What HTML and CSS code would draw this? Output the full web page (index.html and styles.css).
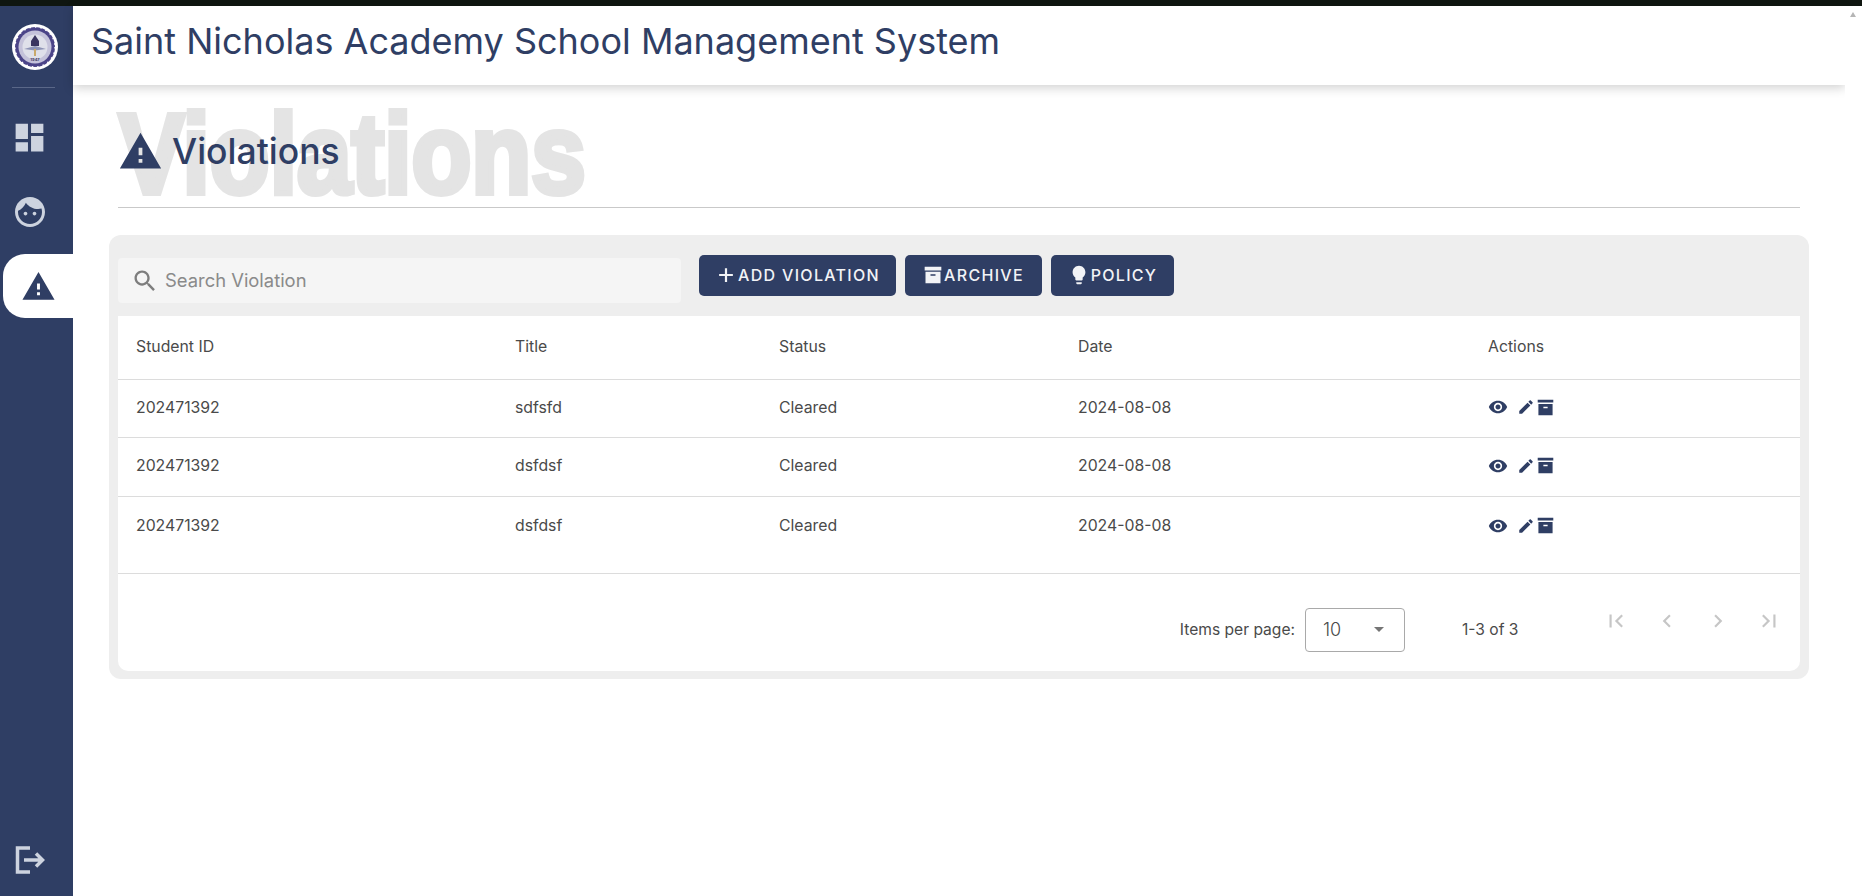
FILE: index.html
```html
<!DOCTYPE html>
<html lang="en">
<head>
    <meta charset="UTF-8">
    <meta name="viewport" content="width=device-width, initial-scale=1.0">
    <title>Violations</title>
    <link rel="stylesheet" href="styles.css">
</head>
<body>
    <div class="topstrip"></div>
    <div class="app">
        <aside class="sidebar">
            <div class="logo">
                <svg viewBox="0 0 46 46" width="46" height="46">
                    <circle cx="23" cy="23" r="23" fill="#fff"/>
                    <circle cx="23" cy="23" r="20" fill="#4b4488"/>
                    <circle cx="23" cy="23" r="20" fill="none" stroke="#fff" stroke-width="1.4" stroke-dasharray="1.5 4"/>
                    <circle cx="23" cy="23" r="16.5" fill="#c4c2da"/>
                    <circle cx="23" cy="23" r="12.5" fill="#dfe0ea"/>
                    <path d="M23 11l4 6v5h-8v-5z" fill="#3a3560"/>
                    <path d="M12 25l11-3 11 3-11 1.500z" fill="#8d93b5"/>
                    <path d="M22 25h2v7h-2z" fill="#c9a96b"/>
                    <text x="23" y="37" class="logo-year">1947</text>
                </svg>
            </div>
            <div class="side-divider"></div>
            <nav class="side-nav">
                <a class="side-item">
                    <svg viewBox="0 0 24 24" width="37" height="37"><path d="M3 13h8V3H3v10zm0 8h8v-6H3v6zm10 0h8V11h-8v10zm0-18v6h8V3h-8z"/></svg>
                </a>
                <a class="side-item">
                    <svg viewBox="0 0 24 24" width="36" height="36"><path d="M9 11.750c-.69 0-1.250.56-1.250 1.250s.56 1.250 1.250 1.250 1.250-.56 1.250-1.250-.56-1.250-1.250-1.250zm6 0c-.69 0-1.250.56-1.250 1.250s.56 1.250 1.250 1.250 1.250-.56 1.250-1.250-.56-1.250-1.250-1.250zM12 2C6.480 2 2 6.480 2 12s4.480 10 10 10 10-4.480 10-10S17.520 2 12 2zm0 18c-4.410 0-8-3.590-8-8 0-.29.02-.58.05-.86 2.360-1.050 4.230-2.980 5.210-5.370C11.070 8.330 14.050 10 17.420 10c.78 0 1.530-.09 2.250-.26.21.71.33 1.470.33 2.260 0 4.410-3.590 8-8 8z"/></svg>
                </a>
                <a class="side-item active">
                    <svg viewBox="0 0 24 24" width="35" height="35"><path d="M1 21h22L12 2 1 21zm12-3h-2v-2h2v2zm0-4h-2v-4h2v4z"/></svg>
                </a>
            </nav>
            <a class="logout">
                <svg viewBox="0 0 30 28" width="30" height="28">
                    <path d="M15 2H2.500v24H15" class="logout-line"/>
                    <path d="M9 14h18M21 7.500l6.500 6.500-6.500 6.500" class="logout-line"/>
                </svg>
            </a>
        </aside>

        <main class="main">
            <header class="header">
                <h1>Saint Nicholas Academy School Management System</h1>
            </header>

            <section class="page-head">
                <span class="watermark">Violations</span>
                <h2>
                    <svg viewBox="0 0 24 24" width="45" height="45"><path d="M1 21h22L12 2 1 21zm12-3h-2v-2h2v2zm0-4h-2v-4h2v4z"/></svg>
                    Violations
                </h2>
            </section>

            <section class="panel">
                <div class="toolbar">
                    <label class="search">
                        <svg viewBox="0 0 24 24" width="28" height="28"><path d="M15.500 14h-.79l-.28-.27C15.410 12.590 16 11.110 16 9.500 16 5.910 13.090 3 9.500 3S3 5.910 3 9.500 5.910 16 9.500 16c1.610 0 3.090-.59 4.230-1.570l.27.28v.79l5 4.990L20.490 19l-4.990-5zm-6 0C7.010 14 5 11.990 5 9.500S7.010 5 9.500 5 14 7.010 14 9.500 11.990 14 9.500 14z"/></svg>
                        <input type="text" placeholder="Search Violation">
                    </label>
                    <button class="btn btn-add">
                        <svg viewBox="0 0 24 24" width="22" height="22"><path d="M19.500 13.200h-6.300v6.300h-2.400v-6.300H4.500v-2.400h6.300V4.500h2.400v6.300h6.300v2.400z"/></svg>
                        ADD VIOLATION
                    </button>
                    <button class="btn btn-archive">
                        <svg viewBox="0 0 24 24" width="20" height="20"><path fill-rule="evenodd" d="M2 2h20v4.500H2zM3 8h18v14H3zM9 11v2h6v-2z"/></svg>
                        ARCHIVE
                    </button>
                    <button class="btn btn-policy">
                        <svg viewBox="0 0 24 24" width="22" height="22"><path d="M9 21c0 .55.45 1 1 1h4c.55 0 1-.45 1-1v-1H9v1zm3-19C8.140 2 5 5.140 5 9c0 2.380 1.190 4.470 3 5.740V17c0 .55.45 1 1 1h6c.55 0 1-.45 1-1v-2.260c1.810-1.270 3-3.360 3-5.740 0-3.860-3.140-7-7-7z"/></svg>
                        POLICY
                    </button>
                </div>

                <div class="table-wrap">
                    <table>
                        <colgroup>
                            <col class="col-id"><col class="col-title"><col class="col-status"><col class="col-date"><col>
                        </colgroup>
                        <thead>
                            <tr><th>Student ID</th><th>Title</th><th>Status</th><th>Date</th><th>Actions</th></tr>
                        </thead>
                        <tbody>
                            <tr>
                                <td>202471392</td><td>sdfsfd</td><td>Cleared</td><td>2024-08-08</td>
                                <td>
                                    <div class="actions">
                                        <svg class="ic-eye" viewBox="0 0 24 24"><path d="M12 4.500C7 4.500 2.730 7.610 1 12c1.730 4.390 6 7.500 11 7.500s9.270-3.110 11-7.500c-1.730-4.390-6-7.500-11-7.500zM12 17c-2.760 0-5-2.240-5-5s2.240-5 5-5 5 2.240 5 5-2.240 5-5 5zm0-8c-1.660 0-3 1.340-3 3s1.340 3 3 3 3-1.340 3-3-1.340-3-3-3z"/></svg>
                                        <svg class="ic-edit" viewBox="0 0 24 24"><path d="M3 17.250V21h3.750L17.810 9.940l-3.750-3.750L3 17.250zM20.710 7.040c.39-.39.39-1.020 0-1.410l-2.340-2.340c-.39-.39-1.020-.39-1.410 0l-1.830 1.830 3.750 3.750 1.830-1.830z"/></svg>
                                        <svg class="ic-box" viewBox="0 0 24 24"><path fill-rule="evenodd" d="M1 1h22v4H1zM2 7h20v16H2zM9 11v2h6v-2z"/></svg>
                                    </div>
                                </td>
                            </tr>
                            <tr>
                                <td>202471392</td><td>dsfdsf</td><td>Cleared</td><td>2024-08-08</td>
                                <td>
                                    <div class="actions">
                                        <svg class="ic-eye" viewBox="0 0 24 24"><path d="M12 4.500C7 4.500 2.730 7.610 1 12c1.730 4.390 6 7.500 11 7.500s9.270-3.110 11-7.500c-1.730-4.390-6-7.500-11-7.500zM12 17c-2.760 0-5-2.240-5-5s2.240-5 5-5 5 2.240 5 5-2.240 5-5 5zm0-8c-1.660 0-3 1.340-3 3s1.340 3 3 3 3-1.340 3-3-1.340-3-3-3z"/></svg>
                                        <svg class="ic-edit" viewBox="0 0 24 24"><path d="M3 17.250V21h3.750L17.810 9.940l-3.750-3.750L3 17.250zM20.710 7.040c.39-.39.39-1.020 0-1.410l-2.340-2.340c-.39-.39-1.020-.39-1.410 0l-1.830 1.830 3.750 3.750 1.830-1.830z"/></svg>
                                        <svg class="ic-box" viewBox="0 0 24 24"><path fill-rule="evenodd" d="M1 1h22v4H1zM2 7h20v16H2zM9 11v2h6v-2z"/></svg>
                                    </div>
                                </td>
                            </tr>
                            <tr>
                                <td>202471392</td><td>dsfdsf</td><td>Cleared</td><td>2024-08-08</td>
                                <td>
                                    <div class="actions">
                                        <svg class="ic-eye" viewBox="0 0 24 24"><path d="M12 4.500C7 4.500 2.730 7.610 1 12c1.730 4.390 6 7.500 11 7.500s9.270-3.110 11-7.500c-1.730-4.390-6-7.500-11-7.500zM12 17c-2.760 0-5-2.240-5-5s2.240-5 5-5 5 2.240 5 5-2.240 5-5 5zm0-8c-1.660 0-3 1.340-3 3s1.340 3 3 3 3-1.340 3-3-1.340-3-3-3z"/></svg>
                                        <svg class="ic-edit" viewBox="0 0 24 24"><path d="M3 17.250V21h3.750L17.810 9.940l-3.750-3.750L3 17.250zM20.710 7.040c.39-.39.39-1.020 0-1.410l-2.340-2.340c-.39-.39-1.020-.39-1.410 0l-1.830 1.830 3.750 3.750 1.830-1.830z"/></svg>
                                        <svg class="ic-box" viewBox="0 0 24 24"><path fill-rule="evenodd" d="M1 1h22v4H1zM2 7h20v16H2zM9 11v2h6v-2z"/></svg>
                                    </div>
                                </td>
                            </tr>
                        </tbody>
                    </table>

                    <div class="paginator">
                        <span class="per-page">Items per page:</span>
                        <div class="select">
                            <span>10</span>
                            <i class="caret"></i>
                        </div>
                        <span class="range">1-3 of 3</span>
                        <div class="pager">
                            <svg viewBox="0 0 24 24" width="26" height="26"><path d="M18.410 16.590L13.820 12l4.590-4.590L17 6l-6 6 6 6zM6 6h2v12H6z"/></svg>
                            <svg viewBox="0 0 24 24" width="26" height="26"><path d="M15.410 7.410L14 6l-6 6 6 6 1.410-1.410L10.830 12z"/></svg>
                            <svg viewBox="0 0 24 24" width="26" height="26"><path d="M10 6L8.590 7.410 13.170 12l-4.580 4.590L10 18l6-6z"/></svg>
                            <svg viewBox="0 0 24 24" width="26" height="26"><path d="M5.590 7.410L10.180 12l-4.590 4.590L7 18l6-6-6-6zM16 6h2v12h-2z"/></svg>
                        </div>
                    </div>
                </div>
            </section>
        </main>

        <div class="scrollbar"><i class="scroll-up"></i></div>
    </div>
</body>
</html>
```

FILE: styles.css
```css
* {
    box-sizing: border-box;
}
body {
    margin: 0;
    height: 896px;
    overflow: hidden;
    background-color: #fff;
    font-family: Inter, "Noto Sans", sans-serif;
    color: #4a4a4a;
}
.topstrip {
    height: 6px;
    background-color: #0f1610;
}
.app {
    display: flex;
    height: 890px;
}

/* sidebar */
.sidebar {
    width: 73px;
    flex: none;
    display: flex;
    flex-direction: column;
    background-color: #2f3e64;
}
.logo {
    padding: 18px 0 0 12px;
    height: 63px;
}
.logo svg {
    display: block;
}
.logo-year {
    font-family: Inter, sans-serif;
    font-size: 4px;
    font-weight: 700;
    text-anchor: middle;
    fill: #3a3560;
}
.side-divider {
    height: 1px;
    margin: 18px 18px 0 12px;
    background-color: #5a6788;
}
.side-nav {
    display: flex;
    flex-direction: column;
    gap: 10px;
    margin-top: 18px;
}
.side-item {
    height: 64px;
    display: flex;
    align-items: center;
    padding-left: 12px;
}
.side-item svg {
    fill: #cdd3df;
}
.side-item:first-child svg {
    margin: -2px 0 0 -1px;
}
.side-item.active {
    margin-left: 3px;
    padding-left: 18px;
    background-color: #fff;
    border-radius: 22px 0 0 22px;
}
.side-item.active svg {
    fill: #2f3e64;
}
.logout {
    margin-top: auto;
    padding: 0 0 22px 15px;
}
.logout svg {
    display: block;
}
.logout-line {
    fill: none;
    stroke: #cdd3df;
    stroke-width: 3.5;
}

/* main */
.main {
    flex: 1;
    min-width: 0;
}
.header {
    height: 79px;
    padding: 0 0 10px 18px;
    display: flex;
    align-items: center;
    background-color: #fff;
    box-shadow: 0 3px 10px rgba(0, 0, 0, 0.18);
}
.header h1 {
    margin: 0;
    font-size: 36px;
    font-weight: 400;
    color: #2f3e64;
}
.page-head {
    position: relative;
    height: 123px;
    margin: 0 45px;
    border-bottom: 1px solid #c9c9c9;
}
.watermark {
    position: absolute;
    left: 1px;
    top: 12px;
    font-family: "Liberation Sans", sans-serif;
    font-size: 114px;
    font-weight: 700;
    line-height: 114px;
    color: #e4e4e4;
    -webkit-text-stroke: 6px #e4e4e4;
    transform: scaleX(0.86);
    transform-origin: left top;
}
.page-head h2 {
    position: relative;
    margin: 0;
    padding-top: 44px;
    display: flex;
    align-items: center;
    gap: 9px;
    font-size: 35.500px;
    font-weight: 500;
    line-height: 45px;
    color: #2f3e64;
}
.page-head h2 svg {
    fill: #2f3e64;
}

/* panel */
.panel {
    margin: 27px 36px 0;
    padding: 0 9px 8px;
    background-color: #eeeeee;
    border-radius: 12px;
}
.toolbar {
    height: 81px;
    padding-top: 20px;
    display: flex;
    align-items: flex-start;
}
.search {
    width: 563px;
    height: 45px;
    margin: 3px 18px 0 0;
    padding-left: 13px;
    display: flex;
    align-items: center;
    gap: 6px;
    background-color: #f5f5f5;
    border-radius: 4px;
}
.search svg {
    flex: none;
    fill: #7d7d7d;
}
.search input {
    flex: 1;
    border: none;
    outline: none;
    padding: 0;
    margin-bottom: 2px;
    background: none;
    font-family: inherit;
    font-size: 18.400px;
    color: #333;
}
.search input::placeholder {
    color: #8a8a8a;
    opacity: 1;
}
.btn {
    height: 41px;
    margin-right: 9px;
    padding: 0 0 2px;
    display: flex;
    align-items: center;
    justify-content: center;
    border: none;
    border-radius: 5px;
    background-color: #2f3e64;
    color: #f2f3f6;
    font-family: inherit;
    font-size: 16px;
    font-weight: 500;
    letter-spacing: 1.300px;
    cursor: pointer;
}
.btn svg {
    fill: #f2f3f6;
    margin-right: 1px;
}
.btn-add {
    width: 197px;
}
.btn-archive {
    width: 137px;
}
.btn-policy {
    width: 123px;
}

/* table */
.table-wrap {
    background-color: #fff;
    border-radius: 0 0 10px 10px;
    height: 355px;
}
table {
    width: 100%;
    height: 257px;
    border-collapse: collapse;
    table-layout: fixed;
    font-size: 15.800px;
}
.col-id {
    width: 379px;
}
.col-title {
    width: 264px;
}
.col-status {
    width: 299px;
}
.col-date {
    width: 410px;
}
th, td {
    padding: 0 0 2px 18px;
    text-align: left;
    font-weight: 400;
    vertical-align: middle;
}
thead tr {
    height: 63px;
    border-bottom: 1px solid #dcdcdc;
}
tbody tr {
    height: 58px;
    border-bottom: 1px solid #dcdcdc;
}
tbody tr:nth-child(2) {
    height: 59px;
}
tbody tr:last-child {
    height: 77px;
}
tbody tr:last-child td {
    padding-bottom: 18px;
}
.actions {
    display: flex;
    align-items: center;
}
.actions svg {
    fill: #2f3e64;
}
.ic-eye {
    width: 20px;
    height: 20px;
    margin-right: 9px;
}
.ic-edit {
    width: 18px;
    height: 18px;
    margin-right: 2px;
}
.ic-box {
    width: 17px;
    height: 17px;
}

/* paginator */
.paginator {
    height: 98px;
    padding: 14px 6px 0 0;
    display: flex;
    align-items: center;
    justify-content: flex-end;
    font-size: 15.600px;
}
.select {
    width: 100px;
    height: 44px;
    margin-left: 10px;
    padding: 0 20px 0 17px;
    display: flex;
    align-items: center;
    justify-content: space-between;
    border: 1px solid #a9a9a9;
    border-radius: 4px;
    font-size: 18px;
    font-weight: 300;
}
.caret {
    width: 0;
    height: 0;
    border-left: 5px solid transparent;
    border-right: 5px solid transparent;
    border-top: 5px solid #757575;
}
.range {
    width: 56px;
    margin-left: 57px;
    white-space: nowrap;
}
.pager {
    margin: 0 0 18px 72px;
    width: 204px;
    display: flex;
    justify-content: space-around;
}
.pager svg {
    fill: #c6c6c6;
}

/* scrollbar */
.scrollbar {
    width: 17px;
    flex: none;
    padding: 6px 0 0 5px;
    background-color: #fff;
}
.scroll-up {
    display: block;
    width: 0;
    height: 0;
    border-left: 3.500px solid transparent;
    border-right: 3.500px solid transparent;
    border-bottom: 5px solid #b5b5b5;
}
```
